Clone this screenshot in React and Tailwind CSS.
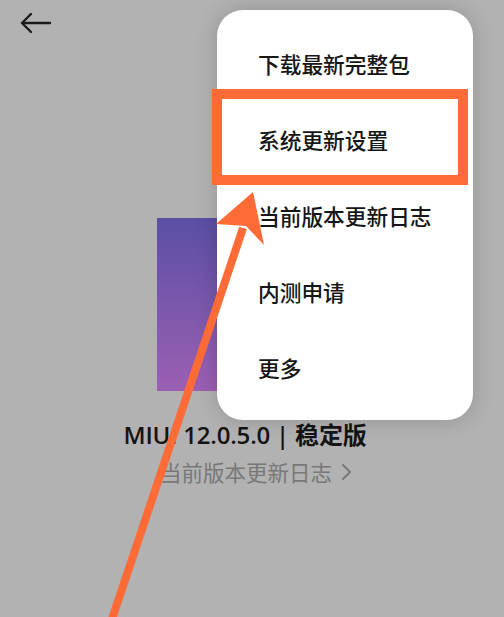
export default function App() {
  const items = ["下载最新完整包", "系统更新设置", "当前版本更新日志", "内测申请", "更多"];
  const font = { fontFamily: '"Noto Sans CJK SC", "Noto Sans", sans-serif' };
  return (
    <div className="relative w-[504px] h-[617px] overflow-hidden bg-[#b2b2b2]" style={font}>
      <div className="h-[46px] pl-[20px] pt-[12px]">
        <svg width="32" height="22" viewBox="0 0 32 22" fill="none" stroke="#1c1c1c" strokeWidth="2.4" strokeLinecap="round" strokeLinejoin="round">
          <path d="M30 11H3" />
          <path d="M11 2L2 11l9 9" />
        </svg>
      </div>
      <div className="flex flex-col items-center pt-[172px]">
        <div className="w-[190px] h-[173px] bg-gradient-to-b from-[#5a4fa4] to-[#9b5fb3]" />
        <div className="mt-[28px] ml-[-14px] text-[24px] leading-[32px] font-semibold tracking-[-0.2px] text-[#141414] font-['Open_Sans','Noto_Sans_CJK_SC',sans-serif]">
          MIUI 12.0.5.0 | 稳定版
        </div>
        <div className="mt-[6px] flex items-center gap-[9px] text-[21.5px] leading-[30px] text-[#787878] pl-[8px]">
          <span>当前版本更新日志</span>
          <svg width="11" height="18" viewBox="0 0 11 18" fill="none" stroke="#787878" strokeWidth="2" strokeLinecap="round" strokeLinejoin="round">
            <path d="M2 2l7 7-7 7" />
          </svg>
        </div>
      </div>

      <div className="absolute left-[217px] top-[10px] w-[256px] h-[410px] bg-white rounded-[26px] py-[16px] shadow-[0_0_22px_rgba(0,0,0,0.18)]">
        {items.map((t) => (
          <div key={t} className="h-[76px] flex items-center pl-[41px] text-[21.7px] font-medium text-[#161616]">
            {t}
          </div>
        ))}
      </div>

      <svg className="absolute left-0 top-0 pointer-events-none" width="504" height="617" viewBox="0 0 504 617">
        <rect x="217" y="94" width="246" height="86" fill="none" stroke="#ff6b36" strokeWidth="10" />
        <line x1="111" y1="622" x2="243" y2="228" stroke="#ff6b36" strokeWidth="8" />
        <polygon points="253,192 264,245 246,226 216,224" fill="#ff6b36" />
      </svg>
    </div>
  );
}
